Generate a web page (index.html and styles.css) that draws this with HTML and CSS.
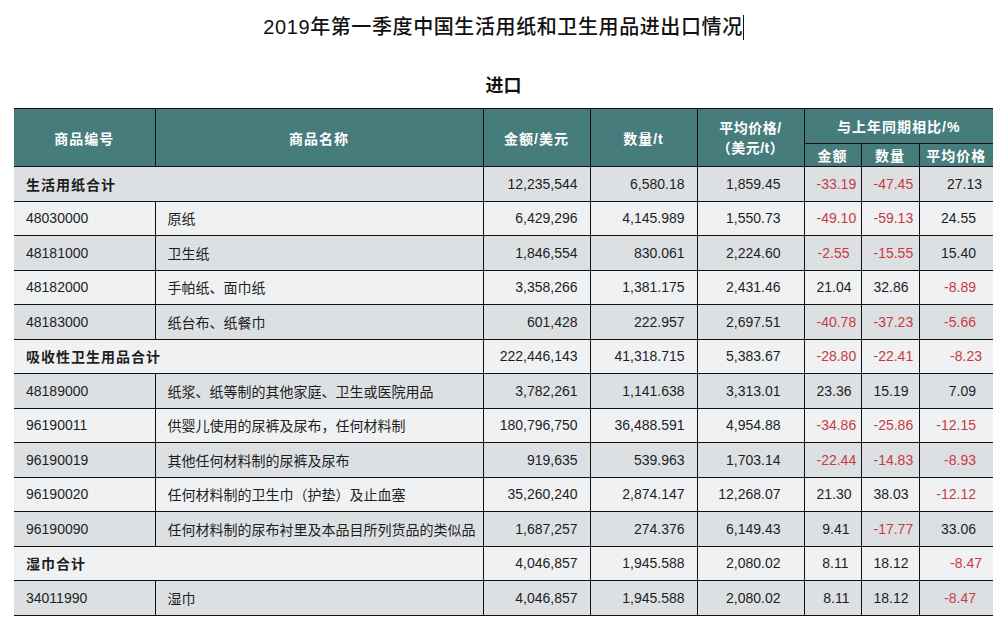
FILE: index.html
```html
<!DOCTYPE html>
<html lang="zh-CN">
<head>
<meta charset="utf-8">
<title>2019年第一季度中国生活用纸和卫生用品进出口情况</title>
<link rel="stylesheet" href="styles.css">
</head>
<body>
<div class="page">
  <h1 class="title">2019年第一季度中国生活用纸和卫生用品进出口情况<span class="caret"></span></h1>
  <h2 class="subtitle">进口</h2>
  <table class="data">
    <colgroup>
      <col class="c1"><col class="c2"><col class="c3"><col class="c4"><col class="c5"><col class="c6"><col class="c7"><col class="c8">
    </colgroup>
    <thead>
      <tr class="h1">
        <th rowspan="2">商品编号</th>
        <th rowspan="2">商品名称</th>
        <th rowspan="2">金额/美元</th>
        <th rowspan="2">数量/t</th>
        <th rowspan="2" class="two">平均价格/<br>（美元/t）</th>
        <th colspan="3">与上年同期相比/%</th>
      </tr>
      <tr class="h2">
        <th>金额</th>
        <th>数量</th>
        <th>平均价格</th>
      </tr>
    </thead>
    <tbody>
      <tr class="dark total"><td colspan="2">生活用纸合计</td><td>12,235,544</td><td>6,580.18</td><td>1,859.45</td><td class="neg">-33.19</td><td class="neg">-47.45</td><td>27.13</td></tr>
      <tr class="light"><td>48030000</td><td>原纸</td><td>6,429,296</td><td>4,145.989</td><td>1,550.73</td><td class="neg">-49.10</td><td class="neg">-59.13</td><td>24.55</td></tr>
      <tr class="dark"><td>48181000</td><td>卫生纸</td><td>1,846,554</td><td>830.061</td><td>2,224.60</td><td class="neg">-2.55</td><td class="neg">-15.55</td><td>15.40</td></tr>
      <tr class="light"><td>48182000</td><td>手帕纸、面巾纸</td><td>3,358,266</td><td>1,381.175</td><td>2,431.46</td><td>21.04</td><td>32.86</td><td class="neg">-8.89</td></tr>
      <tr class="dark"><td>48183000</td><td>纸台布、纸餐巾</td><td>601,428</td><td>222.957</td><td>2,697.51</td><td class="neg">-40.78</td><td class="neg">-37.23</td><td class="neg">-5.66</td></tr>
      <tr class="light total"><td colspan="2">吸收性卫生用品合计</td><td>222,446,143</td><td>41,318.715</td><td>5,383.67</td><td class="neg">-28.80</td><td class="neg">-22.41</td><td class="neg">-8.23</td></tr>
      <tr class="dark"><td>48189000</td><td>纸浆、纸等制的其他家庭、卫生或医院用品</td><td>3,782,261</td><td>1,141.638</td><td>3,313.01</td><td>23.36</td><td>15.19</td><td>7.09</td></tr>
      <tr class="light"><td>96190011</td><td>供婴儿使用的尿裤及尿布，任何材料制</td><td>180,796,750</td><td>36,488.591</td><td>4,954.88</td><td class="neg">-34.86</td><td class="neg">-25.86</td><td class="neg">-12.15</td></tr>
      <tr class="dark"><td>96190019</td><td>其他任何材料制的尿裤及尿布</td><td>919,635</td><td>539.963</td><td>1,703.14</td><td class="neg">-22.44</td><td class="neg">-14.83</td><td class="neg">-8.93</td></tr>
      <tr class="light"><td>96190020</td><td>任何材料制的卫生巾（护垫）及止血塞</td><td>35,260,240</td><td>2,874.147</td><td>12,268.07</td><td>21.30</td><td>38.03</td><td class="neg">-12.12</td></tr>
      <tr class="dark"><td>96190090</td><td>任何材料制的尿布衬里及本品目所列货品的类似品</td><td>1,687,257</td><td>274.376</td><td>6,149.43</td><td>9.41</td><td class="neg">-17.77</td><td>33.06</td></tr>
      <tr class="light total"><td colspan="2">湿巾合计</td><td>4,046,857</td><td>1,945.588</td><td>2,080.02</td><td>8.11</td><td>18.12</td><td class="neg">-8.47</td></tr>
      <tr class="dark"><td>34011990</td><td>湿巾</td><td>4,046,857</td><td>1,945.588</td><td>2,080.02</td><td>8.11</td><td>18.12</td><td class="neg">-8.47</td></tr>
    </tbody>
  </table>
</div>
</body>
</html>
```

FILE: styles.css
```css
html, body {
  margin: 0;
  padding: 0;
  background: #ffffff;
}

body {
  font-family: "Liberation Sans", "Noto Sans CJK SC", sans-serif;
  color: #1e1e1e;
}

.page {
  width: 979px;
  margin-left: 14px;
}

.title {
  margin: 13px 0 0;
  font-size: 20px;
  line-height: 28px;
  font-weight: 500;
  letter-spacing: 0.6px;
  text-align: center;
  color: #111;
}

.caret {
  display: inline-block;
  width: 1px;
  height: 25px;
  background: #111;
  vertical-align: -6px;
  margin-left: 0;
}

.subtitle {
  margin: 33px 0 0;
  font-size: 18px;
  line-height: 24px;
  font-weight: bold;
  text-align: center;
  color: #111;
}

.data {
  margin-top: 10px;
  width: 979px;
  border-collapse: collapse;
  table-layout: fixed;
  font-size: 14px;
}

.c1 { width: 141px; }
.c2 { width: 328px; }
.c3 { width: 107px; }
.c4 { width: 107px; }
.c5 { width: 107px; }
.c6 { width: 57px; }
.c7 { width: 58px; }
.c8 { width: 74px; }

.data th {
  background: #467c7c;
  color: #ffffff;
  font-weight: bold;
  font-size: 14px;
  border: 1px solid #111;
  padding: 0;
  text-align: center;
  letter-spacing: 1px;
}

.data th:first-child { border-left: none; }
.data tr.h1 th:last-child { border-right: none; }
.data tr.h2 th:last-child { border-right: none; }

.data tr.h1 th { height: 34px; }
.data tr.h2 th { height: 22px; }

.data th.two {
  line-height: 20px;
  letter-spacing: 0.5px;
}

.data td {
  height: 33.5px;
  border: 1px solid #111;
  padding: 0 12px;
  text-align: right;
  white-space: nowrap;
}

.data td:first-child {
  border-left: none;
  text-align: left;
}

.data td:last-child {
  border-right: none;
  padding-right: 17px;
}

.data td:nth-child(2) {
  text-align: left;
}

.data tr.total td:first-child {
  font-weight: bold;
  letter-spacing: 1px;
}

.data tr.total td:nth-child(2) {
  text-align: right;
}

.data td:nth-child(6),
.data td:nth-child(7) {
  padding-right: 11px;
}

.data tr:not(.total) td:nth-child(5),
.data tr.total td:nth-child(4) {
  padding-right: 23px;
}

.data tr.dark td { background: #dde0e3; }
.data tr.light td { background: #eff1f3; }

.data td.neg { color: #c83a44; }
```
